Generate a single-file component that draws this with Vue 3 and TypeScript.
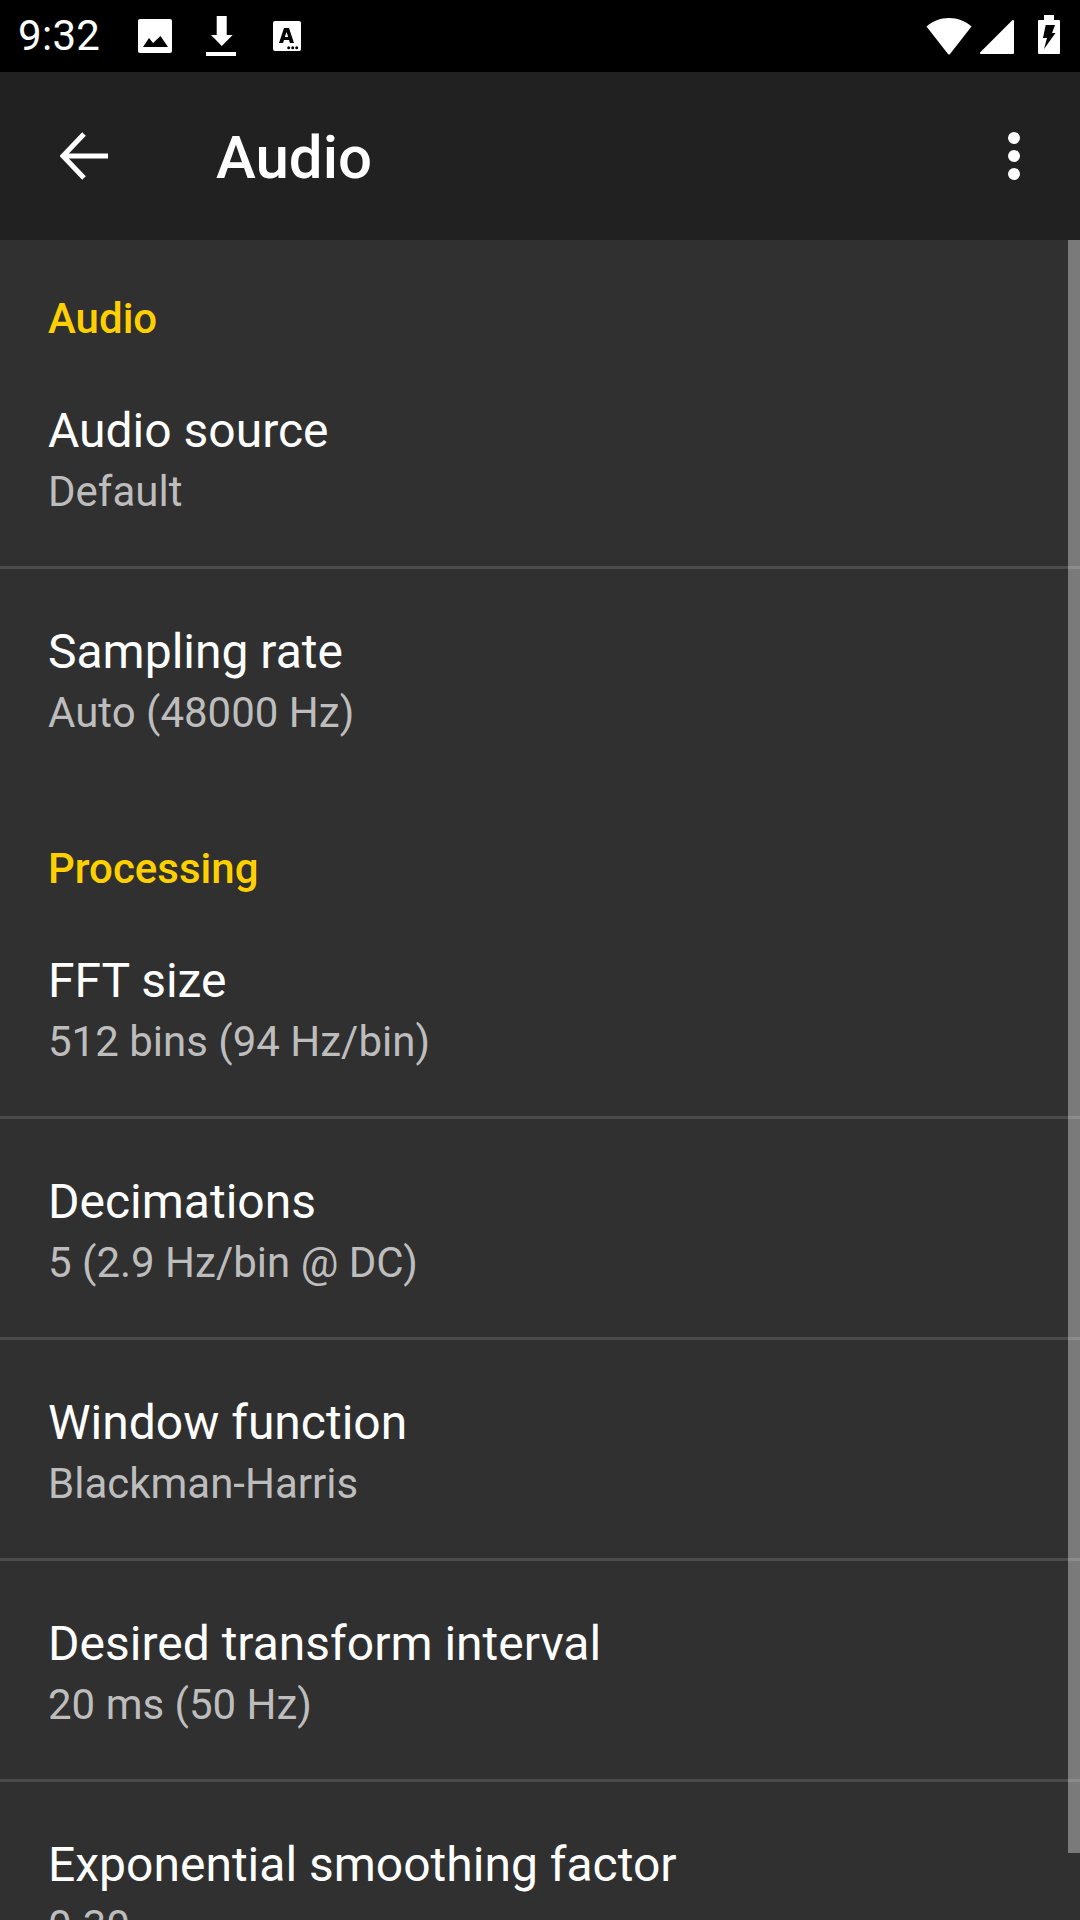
<script setup lang="ts">
interface Pref { title: string; summary: string; divider: boolean }
interface Section { name: string; prefs: Pref[] }
const sections: Section[] = [
  { name: 'Audio', prefs: [
    { title: 'Audio source', summary: 'Default', divider: true },
    { title: 'Sampling rate', summary: 'Auto (48000 Hz)', divider: false },
  ]},
  { name: 'Processing', prefs: [
    { title: 'FFT size', summary: '512 bins (94 Hz/bin)', divider: true },
    { title: 'Decimations', summary: '5 (2.9 Hz/bin @ DC)', divider: true },
    { title: 'Window function', summary: 'Blackman-Harris', divider: true },
    { title: 'Desired transform interval', summary: '20 ms (50 Hz)', divider: true },
    { title: 'Exponential smoothing factor', summary: '0.30', divider: false },
  ]},
]
</script>

<template>
  <div class="screen">
    <header class="status">
      <span class="time">9:32</span>
      <svg class="ni" width="36" height="36" viewBox="0 0 36 36"><path fill="#fff" fill-rule="evenodd" d="M3 1h30a2 2 0 0 1 2 2v30a2 2 0 0 1-2 2H3a2 2 0 0 1-2-2V3a2 2 0 0 1 2-2zM6 29h25L23.500 18 16 25 12 20z"/></svg>
      <svg class="ni dl" width="32" height="40" viewBox="0 0 32 40"><path fill="#fff" d="M11.700 0h10v19h6L16.800 30 6 19h5.700zM1 36h30v4H1z"/></svg>
      <svg class="ni ac" width="28" height="30" viewBox="0 0 28 30"><path fill="#fff" fill-rule="evenodd" d="M2 0h24a2 2 0 0 1 2 2v26a2 2 0 0 1-2 2H2a2 2 0 0 1-2-2V2a2 2 0 0 1 2-2zM11 7 6 22h4l1-3h5l1 3h4L16 7zM13.500 11 15.200 16h-3.400z"/><circle cx="15.700" cy="26.700" r="1.500"/><circle cx="19.700" cy="26.700" r="1.500"/><circle cx="23.700" cy="26.700" r="1.500"/></svg>
      <span class="spacer"></span>
      <svg class="wifi" width="46" height="37" viewBox="0 0 46 37"><path fill="#fff" d="M23 0c9 0 16 3 22.500 8.500L24 36a1.300 1.300 0 0 1-2 0L.5 8.500C7 3 14 0 23 0z"/></svg>
      <svg class="cell" width="34" height="34" viewBox="0 0 34 34"><path fill="#fff" d="M33 0a1 1 0 0 1 1 1v32a1 1 0 0 1-1 1H1a1 1 0 0 1-.7-1.700L32.300.300A1 1 0 0 1 33 0z"/></svg>
      <svg class="batt" width="22" height="39" viewBox="0 0 22 39"><path fill="#fff" fill-rule="evenodd" d="M6 0h10v5h5a1 1 0 0 1 1 1v32a1 1 0 0 1-1 1H1a1 1 0 0 1-1-1V6a1 1 0 0 1 1-1h5zM7.700 10 5 23h4L6 34 17.500 18H14L17 10z"/></svg>
    </header>

    <nav class="toolbar">
      <svg class="back" width="48" height="48" viewBox="0 0 48 48"><path fill="none" stroke="#fff" stroke-width="5" d="M48 24H4M24 2 3 24l21 22"/></svg>
      <h1 class="heading">Audio</h1>
      <span class="spacer"></span>
      <svg class="more" width="12" height="48" viewBox="0 0 12 48"><circle cx="6" cy="6" r="6" fill="#fff"/><circle cx="6" cy="24" r="6" fill="#fff"/><circle cx="6" cy="42" r="6" fill="#fff"/></svg>
    </nav>

    <main class="list">
      <section v-for="s in sections" :key="s.name" class="section">
        <h2 class="category">{{ s.name }}</h2>
        <div v-for="p in s.prefs" :key="p.title" class="pref" :class="{ divided: p.divider }">
          <div class="title">{{ p.title }}</div>
          <div class="summary">{{ p.summary }}</div>
        </div>
      </section>
      <div class="scrollbar"></div>
    </main>
  </div>
</template>

<style>
html, body { margin: 0; background: #303030; }
</style>

<style scoped>
.screen { width: 1080px; height: 1920px; overflow: hidden; display: flex; flex-direction: column; background: #303030; font-family: Roboto, sans-serif; }
.status { height: 72px; flex: none; background: #000; display: flex; align-items: center; padding: 0 20px 0 18px; box-sizing: border-box; color: #fff; }
.time { font-size: 42px; font-weight: 450; letter-spacing: .3px; line-height: 72px; width: 119px; }
.ni { flex: none; }
.dl { margin-left: 32px; }
.ac { margin-left: 36px; }
.spacer { flex: 1; }
.wifi { margin-right: 8px; }
.cell { margin-right: 24px; margin-top: 2px; }
.batt { margin-bottom: 3px; }
.toolbar { height: 168px; flex: none; background: #212121; display: flex; align-items: center; padding: 0 60px; box-sizing: border-box; }
.back { flex: none; margin-right: 108px; }
.heading { margin: 0; padding-top: 4px; font-size: 60px; font-weight: 500; color: #fff; line-height: 72px; }
.list { position: relative; flex: 1; overflow: hidden; }
.category { margin: 0; padding: 0 48px; height: 111px; line-height: 163px; font-size: 42px; font-weight: 500; color: #ffd000; box-sizing: border-box; overflow: hidden; }
.section:first-child .category { height: 108px; line-height: 157px; }
.pref { padding: 49px 48px 0; height: 218px; box-sizing: border-box; }
.pref.divided { height: 221px; border-bottom: 3px solid #4a4a4a; }
.title { font-size: 48px; line-height: 67px; color: #fff; }
.summary { font-size: 42px; line-height: 56px; color: #bdbdbd; }
.scrollbar { position: absolute; right: 0; top: 0; width: 12px; height: 1613px; background: rgba(255,255,255,.36); }
</style>
